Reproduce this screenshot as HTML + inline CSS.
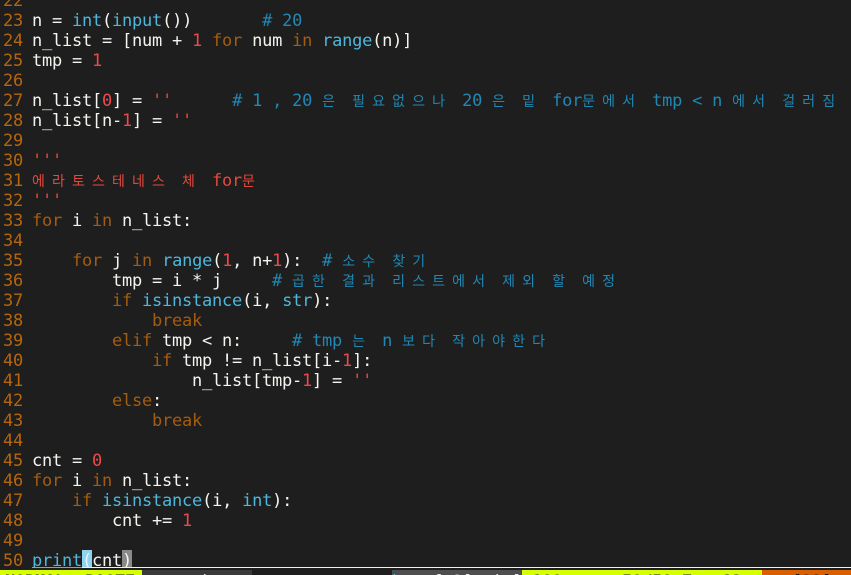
<!DOCTYPE html>
<html><head><meta charset="utf-8">
<style>
html,body{margin:0;padding:0;background:#1e1e1e;width:851px;height:575px;overflow:hidden}
#s{position:relative;width:851px;height:575px;overflow:hidden;font-family:"DejaVu Sans Mono","Liberation Mono",monospace;font-size:17px;letter-spacing:-0.234px;color:#f5f5f0}
.l{position:absolute;left:32px;height:20px;line-height:20px;white-space:pre;margin-top:1px}
.n{position:absolute;left:3px;height:20px;line-height:20px;color:#b5660c;margin-top:1px}
.k{color:#a55c0e}.b{color:#4db8dc}.d{color:#f0484a}.c{color:#1f88b5}.t{color:#e5483c}
i{font-style:normal;display:inline-block;width:20px;font-size:14px;letter-spacing:0;font-family:"Noto Sans CJK KR","NanumGothic",sans-serif;text-align:left;vertical-align:baseline;line-height:12px}
.bar{position:absolute;top:570px;height:5px}
.st{position:absolute;top:572px;height:20px;line-height:20px;white-space:pre;font-weight:bold}
</style></head><body><div id="s">
<div class="n" style="top:-10px">22</div>
<div class="n" style="top:10px">23</div><div class="l" style="top:10px">n = <span class="b">int</span>(<span class="b">input</span>())       <span class="c"># 20</span></div>
<div class="n" style="top:30px">24</div><div class="l" style="top:30px">n_list = [num + <span class="d">1</span> <span class="k">for</span> num <span class="k">in</span> <span class="b">range</span>(n)]</div>
<div class="n" style="top:50px">25</div><div class="l" style="top:50px">tmp = <span class="d">1</span></div>
<div class="n" style="top:70px">26</div>
<div class="n" style="top:90px">27</div><div class="l" style="top:90px">n_list[<span class="d">0</span>] = <span class="t">''</span>      <span class="c"># 1 , 20 <i>은</i> <i>필</i><i>요</i><i>없</i><i>으</i><i>나</i> 20 <i>은</i> <i>밑</i> for<i>문</i><i>에</i><i>서</i> tmp &lt; n <i>에</i><i>서</i> <i>걸</i><i>러</i><i>짐</i></span></div>
<div class="n" style="top:110px">28</div><div class="l" style="top:110px">n_list[n-<span class="d">1</span>] = <span class="t">''</span></div>
<div class="n" style="top:130px">29</div>
<div class="n" style="top:150px">30</div><div class="l t" style="top:150px">'''</div>
<div class="n" style="top:170px">31</div><div class="l t" style="top:170px"><i>에</i><i>라</i><i>토</i><i>스</i><i>테</i><i>네</i><i>스</i> <i>체</i> for<i>문</i></div>
<div class="n" style="top:190px">32</div><div class="l t" style="top:190px">'''</div>
<div class="n" style="top:210px">33</div><div class="l" style="top:210px"><span class="k">for</span> i <span class="k">in</span> n_list:</div>
<div class="n" style="top:230px">34</div>
<div class="n" style="top:250px">35</div><div class="l" style="top:250px">    <span class="k">for</span> j <span class="k">in</span> <span class="b">range</span>(<span class="d">1</span>, n+<span class="d">1</span>):  <span class="c"># <i>소</i><i>수</i> <i>찾</i><i>기</i></span></div>
<div class="n" style="top:270px">36</div><div class="l" style="top:270px">        tmp = i * j     <span class="c"># <i>곱</i><i>한</i> <i>결</i><i>과</i> <i>리</i><i>스</i><i>트</i><i>에</i><i>서</i> <i>제</i><i>외</i> <i>할</i> <i>예</i><i>정</i></span></div>
<div class="n" style="top:290px">37</div><div class="l" style="top:290px">        <span class="k">if</span> <span class="b">isinstance</span>(i, <span class="b">str</span>):</div>
<div class="n" style="top:310px">38</div><div class="l" style="top:310px">            <span class="k">break</span></div>
<div class="n" style="top:330px">39</div><div class="l" style="top:330px">        <span class="k">elif</span> tmp &lt; n:     <span class="c"># tmp <i>는</i> n <i>보</i><i>다</i> <i>작</i><i>아</i><i>야</i><i>한</i><i>다</i></span></div>
<div class="n" style="top:350px">40</div><div class="l" style="top:350px">            <span class="k">if</span> tmp != n_list[i-<span class="d">1</span>]:</div>
<div class="n" style="top:370px">41</div><div class="l" style="top:370px">                n_list[tmp-<span class="d">1</span>] = <span class="t">''</span></div>
<div class="n" style="top:390px">42</div><div class="l" style="top:390px">        <span class="k">else</span>:</div>
<div class="n" style="top:410px">43</div><div class="l" style="top:410px">            <span class="k">break</span></div>
<div class="n" style="top:430px">44</div>
<div class="n" style="top:450px">45</div><div class="l" style="top:450px">cnt = <span class="d">0</span></div>
<div class="n" style="top:470px">46</div><div class="l" style="top:470px"><span class="k">for</span> i <span class="k">in</span> n_list:</div>
<div class="n" style="top:490px">47</div><div class="l" style="top:490px">    <span class="k">if</span> <span class="b">isinstance</span>(i, <span class="b">int</span>):</div>
<div class="n" style="top:510px">48</div><div class="l" style="top:510px">        cnt += <span class="d">1</span></div>
<div class="n" style="top:530px">49</div>
<div class="n" style="top:550px">50</div>
<div style="position:absolute;left:82px;top:550px;width:10px;height:18px;background:#8fd3ef"></div>
<div style="position:absolute;left:122px;top:550px;width:10px;height:18px;background:#8a8a8a"></div>
<div class="l" style="top:550px"><span class="b">print</span><span style="color:#e8f6fb">(</span>cnt)</div>
<div style="position:absolute;left:32px;top:567px;width:819px;height:1px;background:#f0f0f0"></div>
<div style="position:absolute;left:32px;top:567px;width:50px;height:1px;background:#4db8dc"></div>
<div style="position:absolute;left:0;top:568px;width:851px;height:2px;background:#1e1e1e"></div>
<div class="bar" style="left:0;width:142px;background:#d7ff00"></div>
<div class="bar" style="left:142px;width:110px;background:#3a3a3a"></div>
<div class="bar" style="left:252px;width:140px;background:#1e1e1e"></div>
<div class="bar" style="left:392px;width:130px;background:#4e4e4e"></div>
<div class="bar" style="left:522px;width:240px;background:#d7ff00"></div>
<div class="bar" style="left:762px;width:89px;background:#d75f00"></div>
<div class="st" style="left:5px;color:#1c1c1c">NORMAL  PASTE</div>
<div class="st" style="left:202px;color:#e0e0e0;font-weight:normal">k.py</div>
<div class="st" style="left:362px;color:#4db8dc;font-weight:normal">python</div>
<div class="st" style="left:412px;color:#e8e8e8;font-weight:normal">utf-8[unix]</div>
<div class="st" style="left:532px;color:#1c1c3c">100%</div>
<div class="st" style="left:622px;color:#1c1c3c">50/50 Ξ : 12</div>
<div class="st" style="left:792px;color:#1c1c1c;font-weight:normal">[33]t</div>
</div></body></html>
